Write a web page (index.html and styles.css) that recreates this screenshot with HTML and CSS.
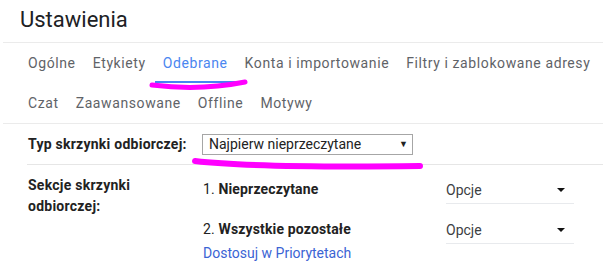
FILE: index.html
```html
<!DOCTYPE html>
<html>
<head>
  <title>Ustawienia</title>
  <link rel="stylesheet" href="styles.css">
</head>
<body>

  <div class="page">
    <h1 class="title">Ustawienia</h1>

    <div class="tabs">
      <div class="tab-row">
        <span class="tab">Ogólne</span>
        <span class="tab">Etykiety</span>
        <span class="tab active">Odebrane</span>
        <span class="tab">Konta i importowanie</span>
        <span class="tab">Filtry i zablokowane adresy</span>
      </div>
      <div class="tab-row">
        <span class="tab">Czat</span>
        <span class="tab">Zaawansowane</span>
        <span class="tab">Offline</span>
        <span class="tab">Motywy</span>
      </div>
    </div>

    <div class="settings">
      <div class="setting setting-type">
        <div class="label">Typ skrzynki odbiorczej:</div>
        <div class="value">
          <div class="box-select">
            <span>Najpierw nieprzeczytane</span>
            <span class="box-arrow">▼</span>
          </div>
        </div>
      </div>

      <div class="setting setting-sections">
        <div class="label">Sekcje skrzynki<br>odbiorczej:</div>
        <div class="value sections">
          <div class="section-item">
            <div class="section-name">1. <b>Nieprzeczytane</b></div>
            <div class="opts">Opcje <span class="caret"></span></div>
          </div>
          <div class="section-item last">
            <div class="section-name">2. <b>Wszystkie pozostałe</b></div>
            <div class="opts">Opcje <span class="caret"></span></div>
          </div>
          <a class="link" href="#">Dostosuj w Priorytetach</a>
        </div>
      </div>
    </div>

    <!-- hand-drawn marks over the screenshot -->
    <svg class="marks" width="603" height="266" viewBox="0 0 603 266">
      <path d="M152 85 Q 200 91 245 82" />
      <path d="M195 161 Q 255 168 420 166" class="thick" />
    </svg>
  </div>

</body>
</html>
```

FILE: styles.css
```css
body {
  margin: 0;
  font-family: Roboto, "Liberation Sans", Arial, sans-serif;
  background: #fff;
  color: #222;
}

.page {
  position: relative;
  width: 603px;
  height: 266px;
  overflow: hidden;
}

.title {
  margin: 0 0 0 3px;
  padding: 0 0 0 17px;
  height: 42px;
  line-height: 40px;
  font-size: 22px;
  font-weight: 400;
  color: #202124;
  border-bottom: 1px solid #ebebeb;
}

.tabs {
  margin-left: 3px;
  padding-left: 17px;
  border-bottom: 1px solid #ebebeb;
}

.tab-row {
  display: flex;
  gap: 1px;
  height: 40px;
}

.tab {
  padding: 0 8px;
  line-height: 40px;
  font-size: 14px;
  letter-spacing: 0.6px;
  color: #5f6368;
  white-space: nowrap;
}

.tab.active {
  color: #4a86f0;
  box-shadow: inset 0 -2px 0 #4285f4;
}

.settings {
  margin-left: 27px;
}

.setting {
  display: flex;
  border-bottom: 1px solid #e6e6e6;
}

.setting:last-child {
  border-bottom: none;
}

.label {
  width: 174px;
  padding-left: 1px;
  font-size: 14px;
  font-weight: bold;
  letter-spacing: 0.25px;
  color: #222;
  line-height: 21px;
}

.setting-type {
  height: 40px;
  align-items: center;
}

.box-select {
  display: flex;
  justify-content: space-between;
  align-items: center;
  width: 199px;
  height: 19px;
  padding: 0 4px 0 6px;
  border: 1px solid #a6a6a6;
  font-size: 14px;
  color: #222;
}

.box-arrow {
  font-size: 9px;
}

.setting-sections .label {
  padding-top: 10px;
}

.sections {
  padding-top: 12px;
  padding-left: 1px;
}

.section-item {
  display: flex;
  margin-bottom: 13px;
}

.section-item.last {
  margin-bottom: 0;
}

.section-name {
  width: 243px;
  line-height: 24px;
  font-size: 14px;
  letter-spacing: 0.15px;
  color: #222;
}

.opts {
  display: flex;
  justify-content: space-between;
  align-items: center;
  width: 119px;
  height: 26px;
  padding-right: 9px;
  border-bottom: 1px solid #e8eaed;
  font-size: 14px;
  color: #3c4043;
}

.caret {
  width: 0;
  height: 0;
  border-left: 4px solid transparent;
  border-right: 4px solid transparent;
  border-top: 4px solid #111;
}

.link {
  display: block;
  line-height: 18px;
  font-size: 14px;
  color: #3b64d4;
  text-decoration: none;
}

.marks {
  position: absolute;
  left: 0;
  top: 0;
  pointer-events: none;
}

.marks path {
  fill: none;
  stroke: #ff00ff;
  stroke-width: 5;
  stroke-linecap: round;
}

.marks path.thick {
  stroke-width: 6;
}
```
